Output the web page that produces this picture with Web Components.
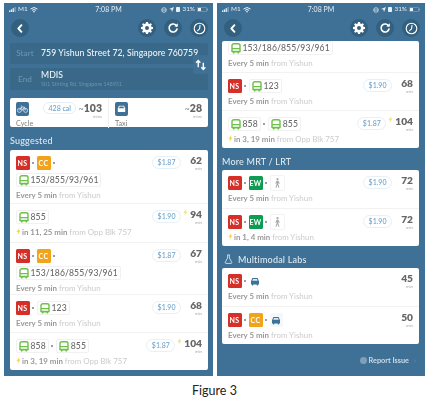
<!DOCTYPE html>
<html lang="en"><head><meta charset="utf-8"><title>Figure 3</title>
<style>
html,body{margin:0;background:#fff;}
body{width:432px;height:404px;overflow:hidden;font-family:Lato,"Liberation Sans",sans-serif;}
.fig{display:grid;grid-template-columns:209px 208px;gap:4px;padding:3px 0 0 4px;}
.cap{text-align:center;font:12.5px/16px Lato,sans-serif;color:#222;padding:7px 3px 0 0;}
</style></head><body>
<template id="t-rail"><style>:host{display:inline-flex;width:14px;height:14px;border-radius:1.5px;align-items:center;justify-content:center;color:#fff;font:700 7px/1 Lato,sans-serif;letter-spacing:.4px;background:var(--c,#d62f27);flex:none}</style><slot></slot></template>
<template id="t-dot"><style>:host{display:inline-flex;width:var(--w,7px);height:14px;align-items:center;justify-content:center;flex:none}i{width:1.6px;height:1.6px;border-radius:50%;background:#8a8a8a;display:block}</style><i></i></template>
<template id="t-bus"><style>:host{display:inline-flex;align-items:center;height:14px;padding:0 2px 0 2px;gap:2px;border:1px solid #f1f1f1;border-radius:2px;box-sizing:border-box;font:500 8.6px/1 Lato,sans-serif;color:#6a6a6a;letter-spacing:.1px;flex:none;background:#fff}svg{width:10px;height:11px;flex:none}</style><svg viewBox="0 0 10 11"><path d="M1 2.5Q1 .8 3 .8H7Q9 .8 9 2.5V8.4H1Z" fill="none" stroke="#6fbf4a" stroke-width="1.4"/><path d="M1 5.6H9" stroke="#6fbf4a" stroke-width="1.4"/><path d="M.8 8.3H9.2V9.4H.8ZM2 9.4H3.5V10.6H2ZM6.5 9.4H8V10.6H6.5Z" fill="#6fbf4a"/></svg><slot></slot></template>
<template id="t-status"><style>:host{display:flex;align-items:center;height:13px;padding:0 5px;color:#dce6ee;font:500 6.4px/1 Lato,sans-serif;flex:none}
.l,.r{display:flex;align-items:center;gap:2px;flex:1}.r{justify-content:flex-end}.c{flex:none;font-size:7px}
svg{display:block}</style>
<div class="l"><svg width="7" height="5" viewBox="0 0 7 5" fill="#e7eef4"><rect y="3.4" width="1.3" height="1.6"/><rect x="1.8" y="2.4" width="1.3" height="2.6"/><rect x="3.6" y="1.2" width="1.3" height="3.8"/><rect x="5.4" width="1.3" height="5" opacity=".45"/></svg><span>M1</span><svg width="8" height="6" viewBox="0 0 8 6" fill="none" stroke="#e7eef4"><path d="M.5 2Q4-1 7.5 2M1.9 3.4Q4 1.6 6.1 3.4"/><path d="M3 4.6 4 3.8 5 4.6 4 5.8Z" fill="#e7eef4" stroke="none"/></svg></div>
<div class="c">7:08 PM</div>
<div class="r"><svg width="6" height="6" viewBox="0 0 6 6" fill="none" stroke="#dce6ee" stroke-width=".8"><circle cx="3" cy="3" r="2.3"/><path d="M1 3H5"/></svg><svg width="5" height="5" viewBox="0 0 5 5" fill="#e7eef4"><path d="M5 0 3 5 2.4 2.6 0 2Z"/></svg><svg width="4" height="5" viewBox="0 0 4 5" fill="#e7eef4"><rect width="4" height="5" rx=".8"/></svg><span>31%</span><svg width="11" height="5" viewBox="0 0 11 5"><rect x=".3" y=".3" width="9.4" height="4.4" rx="1" fill="none" stroke="#9db5c8" stroke-width=".6"/><rect x="1" y="1" width="3" height="3" fill="#eef3f7"/><rect x="10" y="1.6" width=".8" height="1.8" fill="#9db5c8"/></svg></div></template>
<template id="t-nav"><style>:host{display:flex;align-items:center;height:24px;padding:0 5px 0 7px;gap:8px;box-sizing:border-box;flex:none;position:relative;z-index:2}
.b{width:18px;height:18px;border-radius:50%;background:#33607f;display:flex;align-items:center;justify-content:center;flex:none}
.sp{flex:1}svg{display:block}</style>
<div class="b"><svg width="8" height="9" viewBox="0 0 8 9" fill="none" stroke="#fff" stroke-width="1.9" stroke-linecap="round" stroke-linejoin="round"><path d="M5.4 1.2 2.4 4.5 5.4 7.8"/></svg></div><div class="sp"></div>
<div class="b"><svg width="12" height="12" viewBox="0 0 12 12"><path fill="#fff" fill-rule="evenodd" d="M5 0H7L7.3 1.6 8.4 2.1 9.8 1.2 10.9 2.3 10 3.7 10.4 4.8 12 5.1V6.9L10.4 7.2 10 8.3 10.9 9.7 9.8 10.8 8.4 9.9 7.3 10.4 7 12H5L4.7 10.4 3.6 9.9 2.2 10.8 1.1 9.7 2 8.3 1.6 7.2 0 6.9V5.1L1.6 4.8 2 3.7 1.1 2.3 2.2 1.2 3.6 2.1 4.7 1.6ZM6 4A2 2 0 1 0 6 8 2 2 0 1 0 6 4Z"/></svg></div>
<div class="b"><svg width="12" height="12" viewBox="0 0 12 12" fill="none"><path d="M9.6 4A4 4 0 1 0 10 7" stroke="#fff" stroke-width="1.6" stroke-linecap="round"/><path d="M10.8 1.2V4.6H7.4Z" fill="#fff"/></svg></div>
<div class="b"><svg width="13" height="13" viewBox="0 0 13 13" fill="none" stroke="#fff"><circle cx="6.5" cy="6.5" r="5.3" stroke-width="1.1"/><path d="M7 3.2 6.6 6.8 4.6 8.6" stroke-width="1.1" stroke-linecap="round"/></svg></div></template>
<template id="t-phone"><style>:host{display:flex;flex-direction:column;height:373px;background:#3f7096;overflow:hidden;position:relative;filter:blur(.3px)}
.body{display:flex;flex-direction:column;flex:1;padding:0 var(--pr,5px) 0 var(--pl,6px);min-height:0}</style><slot name="top"></slot><div class="body"><slot></slot></div></template>
<template id="t-place"><style>:host{display:flex;align-items:center;background:#3a6889;border-radius:2px;box-sizing:border-box;padding:0 3px 0 6px;height:var(--h,21px);gap:7px;flex:none}
.lb{font:500 8.2px/1 Lato,sans-serif;color:#6c93b0;width:18px;flex:none;text-align:center}
.t{display:flex;flex-direction:column;gap:2px;color:#eef3f7;font:500 8.7px/1 Lato,sans-serif;letter-spacing:.06px;white-space:nowrap}
::slotted(small){font:400 5.2px/1 Lato,sans-serif;color:#6c93b0;letter-spacing:.1px}</style><span class="lb"><slot name="label"></slot></span><div class="t"><slot></slot></div></template>
<template id="t-swap"><style>:host{position:absolute;left:189px;top:52px;width:15px;height:19px;background:#3f7096;border-radius:2px;display:flex;align-items:center;justify-content:center}</style><svg width="12" height="12" viewBox="0 0 13 13" fill="none" stroke="#fff" stroke-width="1.5"><path d="M3.5 9V2M1.2 4 3.5 1.6 5.8 4"/><path d="M9 4V11M6.8 9 9 11.4 11.2 9"/></svg></template>
<template id="t-modes"><style>:host{display:grid;grid-template-columns:99px 1fr;background:#fff;border-radius:2px;height:29px;flex:none;margin-top:8px}
</style><slot></slot></template>
<template id="t-mode"><style>:host{display:grid;grid-template-columns:13px 1fr auto;column-gap:3px;padding:4px 6px 0 6px;position:relative;font-family:Lato,sans-serif}
:host(:first-child){border-right:1px solid #f0f0f0}
.i{width:13px;height:14px;background:#3f7096;border-radius:2px;display:flex;align-items:center;justify-content:center}
.lb{grid-column:1/3;font:400 7.2px/8px Lato,sans-serif;color:#808080;margin-top:1px;white-space:nowrap}
.m{justify-self:end;display:flex;align-items:flex-start;gap:2px;grid-row:1/3;grid-column:2/4}
.n{text-align:right;color:#666;font:800 10.5px/12px Lato,sans-serif;margin-top:0}.n small{display:block;font:400 4.4px/5px Lato,sans-serif;color:#aaa}
.n i{font:400 9px/1 Lato,sans-serif;color:#888}</style><div class="i"><slot name="icon"></slot></div>
<div class="m"><slot name="pill"></slot><div class="n"><i>~</i><slot name="n"></slot><small>mins</small></div></div><div class="lb"><slot name="label"></slot></div></template>
<template id="t-pill"><style>:host{display:block;font:500 7px/10px Lato,sans-serif;color:#6fa3c9;border:1px solid #e4eff7;border-radius:6px;padding:0 4.5px;white-space:nowrap}</style><slot></slot></template>
<template id="t-head"><style>:host{display:flex;align-items:center;gap:3px;color:#dfe9f0;font:500 9px/1 Lato,sans-serif;letter-spacing:.2px;height:var(--h,22px);padding:4px 0 0 0;box-sizing:border-box;flex:none}</style><slot></slot></template>
<template id="t-card"><style>:host{display:flex;flex-direction:column;background:#fff;border-radius:2px;flex:none;overflow:hidden;font-family:Lato,sans-serif}</style><slot></slot></template>
<template id="t-row"><style>:host{display:grid;grid-template-columns:1fr auto;padding:6px 6px 0 5.5px;height:var(--h,38px);box-sizing:border-box;border-top:1px solid #f2f2f2;align-content:start;font-family:Lato,sans-serif}
:host(:first-child){border-top:0}
:host([flush]){padding-top:0}
.legs{display:flex;flex-direction:column;gap:3px;align-items:flex-start}
.line{display:flex;align-items:center;height:14px}
.r{display:flex;align-items:flex-start;gap:3px;height:14px}
.price{font:500 7px/11px Lato,sans-serif;color:#6fa3c9;border:1px solid #e6f0f7;border-radius:6.5px;padding:0 4.5px;margin:0 6px 0 0}
:host([live]) .price{margin-right:0}
.t{min-width:12px;text-align:right;color:#666;font:800 10.2px/11px Lato,sans-serif;margin-top:-1px}.t small{display:block;font:400 4.4px/5px Lato,sans-serif;color:#aaa}
.f{grid-column:1/3;font:700 7.9px/8px Lato,sans-serif;color:#999;margin:3.5px 0 0 .5px;white-space:nowrap;display:flex;gap:1px;align-items:center}
::slotted(span[slot=from]){font-weight:400;color:#cbcbcb}
svg{display:none;flex:none}
:host([live]) svg{display:block}
.z{margin:-1px -1px 0 -1px;width:5px;height:7px}
</style><div class="legs"><div class="line"><slot name="a"></slot></div><slot name="b"></slot></div>
<div class="r"><div class="price"><slot name="price"></slot></div><svg class="z" viewBox="0 0 5 7"><path d="M3.4 0 .4 4H2L1.3 7 4.6 2.6H3Z" fill="#f7e27c"/></svg><div class="t"><slot name="time"></slot><small>min</small></div></div>
<div class="f"><svg width="5" height="7" viewBox="0 0 5 7"><path d="M3.4 0 .4 4H2L1.3 7 4.6 2.6H3Z" fill="#f5d65a"/></svg><span><slot name="freq"></slot> <slot name="from"></slot></span></div></template>
<template id="t-plain"><style>:host{display:inline-flex;width:13px;height:14px;align-items:center;justify-content:center;border:1px solid #f3f3f3;border-radius:2px;flex:none;background:#fff}svg{display:block}</style><slot></slot></template>
<template id="t-report"><style>:host{display:flex;justify-content:flex-end;align-items:center;gap:2px;color:#cddbe6;font:700 7.3px/1 Lato,sans-serif;padding:13px 3px 0 0}
i{width:7px;height:7px;border-radius:50%;background:#7fa0b8;display:block}
b{color:#5a88aa;font:700 7px/1 Lato,sans-serif;margin-left:3px}</style><i></i><slot></slot><b>›</b></template>

<div class="fig">
<app-phone>
  <status-bar slot="top"></status-bar>
  <nav-bar slot="top"></nav-bar>
  <place-box style="margin-top:3px"><span slot="label">Start</span>759 Yishun Street 72, Singapore 760759</place-box>
  <place-box style="margin-top:4px;--h:22px"><span slot="label">End</span>MDIS<small>501 Stirling Rd, Singapore 148951</small></place-box>
  <swap-button></swap-button>
  <mode-strip>
    <mode-item>
      <svg slot="icon" width="11" height="8" viewBox="0 0 11 8" fill="none" stroke="#dfe9f0" stroke-width=".8"><circle cx="2.4" cy="5.4" r="2"/><circle cx="8.6" cy="5.4" r="2"/><path d="M2.4 5.4 4.4 2H7.4L8.6 5.4M4.4 2 5.4 5.4 7.4 2M3.8 1H5"/></svg>
      <price-pill slot="pill">428 cal</price-pill><span slot="n">103</span><span slot="label">Cycle</span>
    </mode-item>
    <mode-item>
      <svg slot="icon" width="9" height="8" viewBox="0 0 9 8" fill="#fff"><path d="M2 .8H7L8.2 3.4V7H.8V3.4Z"/><path d="M2.6 1.6H6.4L7 3.2H2Z" fill="#3f7096"/></svg>
      <span slot="n">28</span><span slot="label">Taxi</span>
    </mode-item>
  </mode-strip>
  <section-head style="--h:23px">Suggested</section-head>
  <route-card>
    <route-row style="--h:53px"><span slot="a" style="display:contents"><rail-badge>NS</rail-badge><dot-sep></dot-sep><rail-badge style="--c:#f2a31c">CC</rail-badge><dot-sep></dot-sep></span><bus-chip slot="b">153/855/93/961</bus-chip><span slot="price">$1.87</span><span slot="time">62</span><span slot="freq">Every 5 min</span><span slot="from">from Yishun</span></route-row>
    <route-row live style="--h:39px"><bus-chip slot="a">855</bus-chip><span slot="price">$1.90</span><span slot="time">94</span><span slot="freq">in 11, 25 min</span><span slot="from">from Opp Blk 757</span></route-row>
    <route-row style="--h:52px"><span slot="a" style="display:contents"><rail-badge>NS</rail-badge><dot-sep></dot-sep><rail-badge style="--c:#f2a31c">CC</rail-badge><dot-sep></dot-sep></span><bus-chip slot="b">153/186/855/93/961</bus-chip><span slot="price">$1.87</span><span slot="time">67</span><span slot="freq">Every 5 min</span><span slot="from">from Yishun</span></route-row>
    <route-row style="--h:38px"><span slot="a" style="display:contents"><rail-badge>NS</rail-badge><dot-sep></dot-sep><bus-chip>123</bus-chip></span><span slot="price">$1.90</span><span slot="time">68</span><span slot="freq">Every 5 min</span><span slot="from">from Yishun</span></route-row>
    <route-row live style="--h:38px"><span slot="a" style="display:contents"><bus-chip>858</bus-chip><dot-sep></dot-sep><bus-chip>855</bus-chip></span><span slot="price">$1.87</span><span slot="time">104</span><span slot="freq">in 3, 19 min</span><span slot="from">from Opp Blk 757</span></route-row>
  </route-card>
</app-phone>
<app-phone style="--pl:5px;--pr:6px">
  <status-bar slot="top"></status-bar>
  <nav-bar slot="top"></nav-bar>
  <route-card style="margin-top:1px">
    <route-row flush style="--h:31px"><bus-chip slot="a">153/186/855/93/961</bus-chip><span slot="price"></span><span slot="time"></span><span slot="freq">Every 5 min</span><span slot="from">from Yishun</span></route-row>
    <route-row style="--h:38px"><span slot="a" style="display:contents"><rail-badge>NS</rail-badge><dot-sep></dot-sep><bus-chip>123</bus-chip></span><span slot="price">$1.90</span><span slot="time">68</span><span slot="freq">Every 5 min</span><span slot="from">from Yishun</span></route-row>
    <route-row live style="--h:38px"><span slot="a" style="display:contents"><bus-chip>858</bus-chip><dot-sep></dot-sep><bus-chip>855</bus-chip></span><span slot="price">$1.87</span><span slot="time">104</span><span slot="freq">in 3, 19 min</span><span slot="from">from Opp Blk 757</span></route-row>
  </route-card>
  <section-head>More MRT / LRT</section-head>
  <route-card>
    <route-row style="--h:38px"><span slot="a" style="display:contents"><rail-badge>NS</rail-badge><dot-sep></dot-sep><rail-badge style="--c:#0c9c52">EW</rail-badge><dot-sep></dot-sep><plain-chip><svg width="7" height="10" viewBox="0 0 7 10" fill="#a9a9a9"><circle cx="3.5" cy="1.2" r="1.1"/><path d="M2.6 2.7H4.4L5.8 5.4 5 5.8 4.4 4.8V6.4L5.4 9.8H4.4L3.4 7 2.4 9.8H1.4L2.6 6.2V4.6L2 5.8 1.2 5.4Z"/></svg></plain-chip></span><span slot="price">$1.90</span><span slot="time">72</span><span slot="freq">Every 5 min</span><span slot="from">from Yishun</span></route-row>
    <route-row style="--h:38px" bolt><span slot="a" style="display:contents"><rail-badge>NS</rail-badge><dot-sep></dot-sep><rail-badge style="--c:#0c9c52">EW</rail-badge><dot-sep></dot-sep><plain-chip><svg width="7" height="10" viewBox="0 0 7 10" fill="#a9a9a9"><circle cx="3.5" cy="1.2" r="1.1"/><path d="M2.6 2.7H4.4L5.8 5.4 5 5.8 4.4 4.8V6.4L5.4 9.8H4.4L3.4 7 2.4 9.8H1.4L2.6 6.2V4.6L2 5.8 1.2 5.4Z"/></svg></plain-chip></span><span slot="price">$1.90</span><span slot="time">72</span><span slot="freq">in 1, 4 min</span><span slot="from">from Yishun</span></route-row>
  </route-card>
  <section-head><svg width="9" height="10" viewBox="0 0 9 10" fill="none" stroke="#c5d4df" stroke-width="1" style="margin:0 2px 0 2px"><path d="M3 1H6M3.6 1V4L1.2 8.4Q1 9.4 2 9.4H7Q8 9.4 7.8 8.4L5.4 4V1"/></svg>Multimodal Labs</section-head>
  <route-card>
    <route-row style="--h:38px"><span slot="a" style="display:contents"><rail-badge>NS</rail-badge><dot-sep></dot-sep><taxi-glyph></taxi-glyph></span><span slot="price" data-none></span><span slot="time">45</span><span slot="freq">Every 5 min</span><span slot="from">from Yishun</span></route-row>
    <route-row style="--h:38px"><span slot="a" style="display:contents"><rail-badge>NS</rail-badge><dot-sep></dot-sep><rail-badge style="--c:#f2a31c">CC</rail-badge><dot-sep></dot-sep><taxi-glyph style="background:#f4f8fb;border-radius:2px"></taxi-glyph></span><span slot="price" data-none></span><span slot="time">50</span><span slot="freq">Every 5 min</span><span slot="from">from Yishun</span></route-row>
  </route-card>
  <report-link>Report Issue</report-link>
</app-phone>
</div>
<div class="cap">Figure 3</div>
<script>
const tpl=(tag,id)=>customElements.define(tag,class extends HTMLElement{constructor(){super();this.attachShadow({mode:'open'}).append(document.getElementById(id).content.cloneNode(true));}});
[['rail-badge','t-rail'],['dot-sep','t-dot'],['bus-chip','t-bus'],['status-bar','t-status'],['nav-bar','t-nav'],['app-phone','t-phone'],['place-box','t-place'],['swap-button','t-swap'],['mode-strip','t-modes'],['mode-item','t-mode'],['price-pill','t-pill'],['section-head','t-head'],['route-card','t-card'],['route-row','t-row'],['plain-chip','t-plain'],['report-link','t-report']].forEach(a=>tpl(...a));
customElements.define('taxi-glyph',class extends HTMLElement{constructor(){super();this.attachShadow({mode:'open'}).innerHTML='<style>:host{display:inline-flex;width:13px;height:14px;align-items:center;justify-content:center;flex:none}</style><svg width="10" height="9" viewBox="0 0 10 9" fill="#3f7096"><path d="M2.4 1H7.6L9 4.2V7.4H8V8.4H6.8V7.4H3.2V8.4H2V7.4H1V4.2Z"/><path d="M3 1.9H7L7.8 3.8H2.2Z" fill="#dfe9f0"/></svg>';}});
document.querySelectorAll('span[data-none]').forEach(s=>{s.closest('route-row').shadowRoot.querySelector('.price').style.visibility='hidden';});
document.querySelectorAll('route-row[flush]').forEach(r=>{r.shadowRoot.querySelector('.r').style.display='none';});
document.querySelectorAll('route-row[bolt]').forEach(r=>{r.shadowRoot.querySelector('.f svg').style.display='block';});
</script>
</body></html>
